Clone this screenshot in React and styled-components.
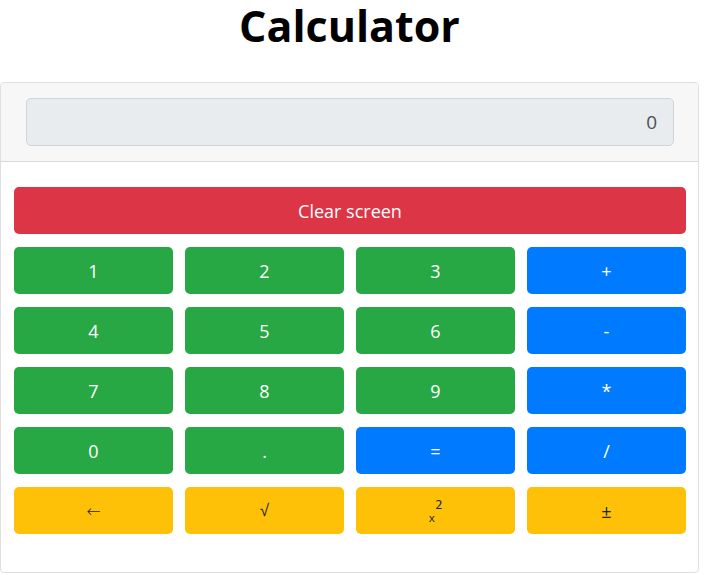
import React from 'react';
import styled, { createGlobalStyle } from 'styled-components';

const GlobalStyle = createGlobalStyle`
  body {
    margin: 0;
    font-family: 'Open Sans', 'Liberation Sans', sans-serif;
    color: #212529;
    background: #fff;
  }
`;

const rows = [
  [
    { label: '1', variant: 'green' },
    { label: '2', variant: 'green' },
    { label: '3', variant: 'green' },
    { label: '+', variant: 'blue' },
  ],
  [
    { label: '4', variant: 'green' },
    { label: '5', variant: 'green' },
    { label: '6', variant: 'green' },
    { label: '-', variant: 'blue' },
  ],
  [
    { label: '7', variant: 'green' },
    { label: '8', variant: 'green' },
    { label: '9', variant: 'green' },
    { label: '*', variant: 'blue' },
  ],
  [
    { label: '0', variant: 'green' },
    { label: '.', variant: 'green' },
    { label: '=', variant: 'blue' },
    { label: '/', variant: 'blue' },
  ],
  [
    { label: '←', variant: 'yellow', symbol: true },
    { label: '√', variant: 'yellow', symbol: true },
    { label: 'square', variant: 'yellow' },
    { label: '±', variant: 'yellow' },
  ],
];

const colors = {
  red: { bg: '#dc3545', fg: '#fff' },
  green: { bg: '#28a745', fg: '#fff' },
  blue: { bg: '#007bff', fg: '#fff' },
  yellow: { bg: '#ffc107', fg: '#212529' },
};

const App = () => {
  return (
    <Page>
      <GlobalStyle />
      <Title>Calculator</Title>
      <Card>
        <CardHeader>
          <Screen readOnly value="0" />
        </CardHeader>
        <CardBody>
          <KeyButton variant="red">Clear screen</KeyButton>
          <KeyGrid>
            {rows.flat().map((key, i) => (
              <KeyButton key={i} variant={key.variant}>
                {key.label === 'square' ? (
                  <Square>
                    x<sup>2</sup>
                  </Square>
                ) : key.symbol ? (
                  <Symbol>{key.label}</Symbol>
                ) : (
                  key.label
                )}
              </KeyButton>
            ))}
          </KeyGrid>
        </CardBody>
      </Card>
    </Page>
  );
};

const Page = styled.div`
  width: 699px;
`;

const Title = styled.h1`
  margin: 0;
  height: 82px;
  text-align: center;
  font-size: 43px;
  font-weight: 700;
  line-height: 52px;
  color: #000;
`;

const Card = styled.div`
  height: 491px;
  box-sizing: border-box;
  border: 1px solid rgba(0, 0, 0, 0.125);
  border-radius: 4px;
  overflow: hidden;
`;

const CardHeader = styled.div`
  background: #f7f7f7;
  padding: 15px 24px 15px 25px;
  border-bottom: 1px solid rgba(0, 0, 0, 0.125);
`;

const Screen = styled.input`
  display: block;
  width: 100%;
  height: 48px;
  box-sizing: border-box;
  padding: 8px 16px;
  font-family: 'Open Sans', 'Liberation Sans', sans-serif;
  font-size: 19px;
  text-align: right;
  color: #495057;
  background: #e9ecef;
  border: 1px solid #ced4da;
  border-radius: 5px;
  outline: none;
`;

const CardBody = styled.div`
  padding: 25px 12px 0 13px;
  display: flex;
  flex-direction: column;
  gap: 13px;
`;

const KeyGrid = styled.div`
  display: grid;
  grid-template-columns: repeat(4, 1fr);
  column-gap: 12px;
  row-gap: 13px;
`;

const KeyButton = styled.button`
  height: 47px;
  border: none;
  border-radius: 5px;
  font-family: 'Open Sans', 'Liberation Sans', sans-serif;
  font-size: 18px;
  background: ${(p) => colors[p.variant].bg};
  color: ${(p) => colors[p.variant].fg};
  display: flex;
  align-items: center;
  justify-content: center;
  padding: 0;
`;

const Symbol = styled.span`
  font-family: 'DejaVu Sans', sans-serif;
  font-weight: 300;
  font-size: 17px;
`;

const Square = styled.span`
  font-family: 'DejaVu Sans Mono', monospace;
  font-size: 11px;
  position: relative;
  top: 5px;
  sup {
    font-size: 12px;
    position: relative;
    top: -8px;
  }
`;

export default App;
